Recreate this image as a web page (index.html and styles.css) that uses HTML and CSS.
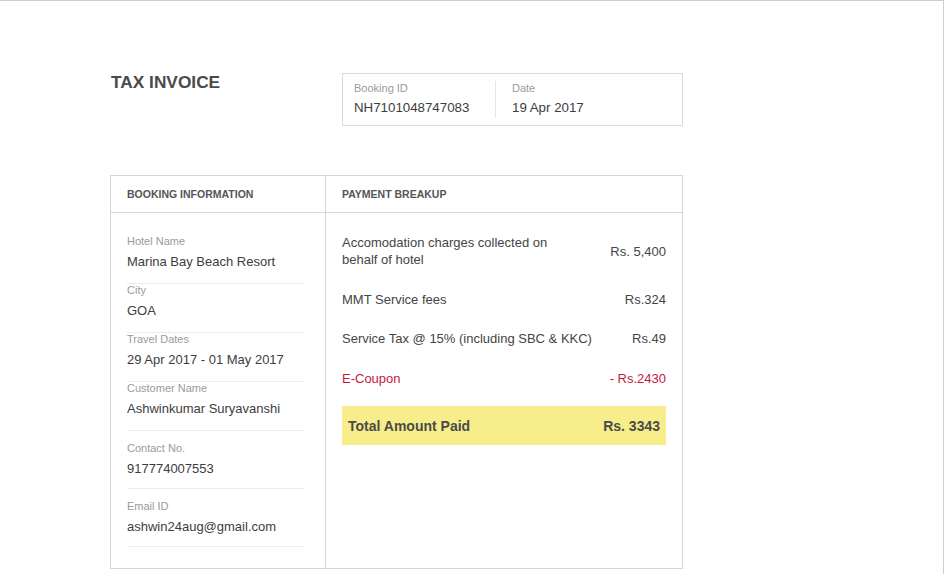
FILE: index.html
```html
<!DOCTYPE html>
<html>
<head>
<meta charset="utf-8">
<title>Tax Invoice</title>
<link rel="stylesheet" href="styles.css">
</head>
<body>
<div class="page">
  <div class="top-row">
    <h1 class="title">TAX INVOICE</h1>
    <div class="meta-box">
      <div class="meta-cell meta-id">
        <div class="meta-label">Booking ID</div>
        <div class="meta-value">NH7101048747083</div>
      </div>
      <div class="meta-cell meta-date">
        <div class="meta-label">Date</div>
        <div class="meta-value">19 Apr 2017</div>
      </div>
    </div>
  </div>

  <div class="invoice-table">
    <div class="col col-info">
      <div class="col-head">BOOKING INFORMATION</div>
      <div class="col-body info-body">
        <div class="info-item">
          <div class="info-label">Hotel Name</div>
          <div class="info-value">Marina Bay Beach Resort</div>
        </div>
        <div class="info-item">
          <div class="info-label">City</div>
          <div class="info-value">GOA</div>
        </div>
        <div class="info-item">
          <div class="info-label">Travel Dates</div>
          <div class="info-value">29 Apr 2017 - 01 May 2017</div>
        </div>
        <div class="info-item">
          <div class="info-label">Customer Name</div>
          <div class="info-value">Ashwinkumar Suryavanshi</div>
        </div>
        <div class="info-item spaced">
          <div class="info-label">Contact No.</div>
          <div class="info-value">917774007553</div>
        </div>
        <div class="info-item spaced">
          <div class="info-label">Email ID</div>
          <div class="info-value">ashwin24aug@gmail.com</div>
        </div>
      </div>
    </div>
    <div class="col col-pay">
      <div class="col-head">PAYMENT BREAKUP</div>
      <div class="col-body pay-body">
        <div class="pay-row">
          <div class="pay-name">Accomodation charges collected on<br>behalf of hotel</div>
          <div class="pay-amount">Rs. 5,400</div>
        </div>
        <div class="pay-row">
          <div class="pay-name">MMT Service fees</div>
          <div class="pay-amount">Rs.324</div>
        </div>
        <div class="pay-row">
          <div class="pay-name">Service Tax @ 15% (including SBC &amp; KKC)</div>
          <div class="pay-amount">Rs.49</div>
        </div>
        <div class="pay-row discount">
          <div class="pay-name">E-Coupon</div>
          <div class="pay-amount">- Rs.2430</div>
        </div>
        <div class="pay-total">
          <div>Total Amount Paid</div>
          <div>Rs. 3343</div>
        </div>
      </div>
    </div>
  </div>
</div>
</body>
</html>
```

FILE: styles.css
```css
* { box-sizing: border-box; }

html, body {
  margin: 0;
  padding: 0;
  background: #fff;
}

body {
  font-family: "Liberation Sans", Arial, sans-serif;
  color: #3d3d3d;
}

.page {
  width: 944px;
  min-height: 574px;
  border-top: 1px solid #cfcfcf;
  border-right: 1px solid #cfcfcf;
  padding-top: 71px;
}

.top-row {
  display: flex;
  align-items: flex-start;
  margin-left: 110px;
  width: 573px;
}

.title {
  width: 232px;
  margin: 0;
  padding-left: 1px;
  font-size: 17.3px;
  line-height: 20px;
  font-weight: bold;
  color: #4a4a4a;
}

.meta-box {
  margin-top: 1px;
  width: 341px;
  height: 53px;
  border: 1px solid #dadada;
  display: flex;
  padding: 7px 0;
}

.meta-cell {
  display: flex;
  flex-direction: column;
  gap: 4px;
}

.meta-id {
  width: 152px;
  padding-left: 11px;
}

.meta-date {
  border-left: 1px solid #e6e6e6;
  padding-left: 16px;
}

.meta-label {
  font-size: 11px;
  line-height: 14px;
  color: #9a9a9a;
}

.meta-value {
  font-size: 13.3px;
  line-height: 18px;
  color: #3d3d3d;
}

.invoice-table {
  margin-left: 110px;
  margin-top: 49px;
  width: 573px;
  border: 1px solid #d6d6d6;
  display: flex;
  align-items: stretch;
}

.col {
  display: flex;
  flex-direction: column;
}

.col-info {
  width: 214px;
}

.col-pay {
  flex: 1;
  border-left: 1px solid #d6d6d6;
}

.col-head {
  height: 37px;
  border-bottom: 1px solid #d6d6d6;
  padding: 11px 16px 0;
  font-size: 10.5px;
  line-height: 14px;
  font-weight: bold;
  color: #555;
}

.col-body {
  padding-top: 21px;
}

.info-body {
  padding: 21px 21px 21px 16px;
}

.info-item {
  padding-bottom: 12px;
  border-bottom: 1px solid #ececec;
}

.info-item + .info-item .info-label {
  margin-top: -1px;
}

.info-item.spaced {
  padding-top: 11px;
  padding-bottom: 10px;
}

.info-label {
  font-size: 11px;
  line-height: 14px;
  color: #9a9a9a;
}

.info-value {
  margin-top: 5px;
  font-size: 13px;
  line-height: 18px;
  color: #3d3d3d;
}

.pay-body {
  padding: 21px 16px 16px;
  display: flex;
  flex-direction: column;
  gap: 22.5px;
}

.pay-row {
  display: flex;
  justify-content: space-between;
  align-items: center;
  font-size: 13px;
  line-height: 17px;
  color: #444;
}

.pay-amount {
  text-align: right;
}

.pay-row.discount {
  color: #c2183f;
}

.pay-total {
  margin-top: -3px;
  height: 39px;
  background: #f7ed8a;
  display: flex;
  justify-content: space-between;
  align-items: center;
  padding: 0 6px;
  font-size: 14px;
  font-weight: bold;
  color: #4a4a4a;
}
```
